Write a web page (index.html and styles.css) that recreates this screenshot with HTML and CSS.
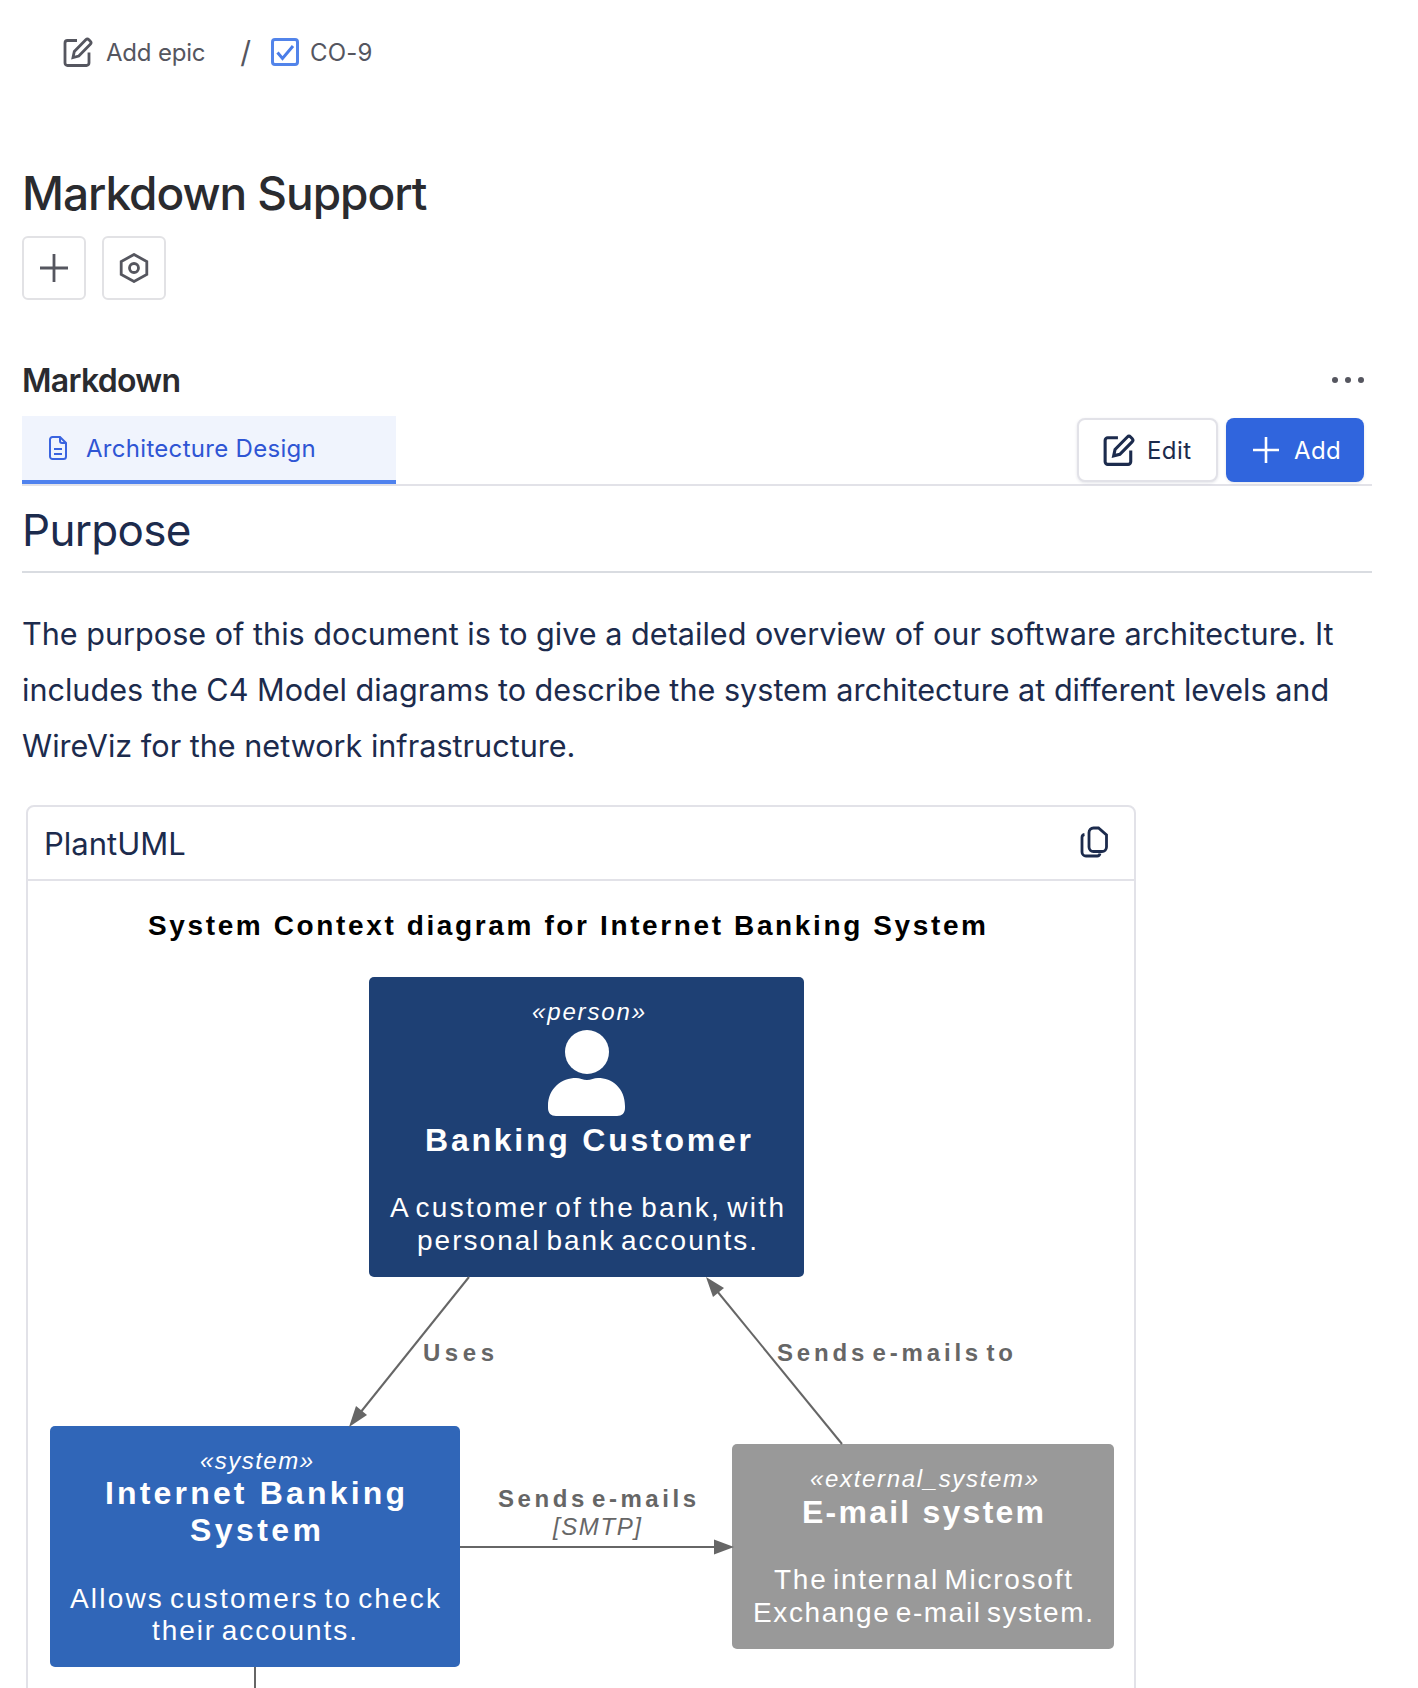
FILE: index.html
```html
<!DOCTYPE html>
<html lang="en">
<head>
    <meta charset="UTF-8">
    <meta name="viewport" content="width=device-width, initial-scale=1.0">
    <title>Markdown Support</title>
    <link rel="stylesheet" href="styles.css">
</head>
<body>

    <div class="page">
        <!-- Breadcrumb -->
        <div class="breadcrumb">
            <svg class="icon-crumb" viewBox="0 0 30 30"><path d="M14 3.500H4.500a2.500 2.500 0 0 0-2.500 2.500V26a2.500 2.500 0 0 0 2.500 2.500h19a2.500 2.500 0 0 0 2.500-2.500V15.500"/><path d="M10 20.500l1.300-6L22.800 2.800a2.200 2.200 0 0 1 3.100 0l1.400 1.400a2.200 2.200 0 0 1 0 3.100L15.800 19z"/></svg>
            <span class="crumb-text">Add epic</span>
            <span class="crumb-slash">/</span>
            <span class="check-box"><svg viewBox="0 0 22 22"><path d="M3.500 11.500l5 6L19 5"/></svg></span>
            <span class="crumb-text crumb-issue">CO-9</span>
        </div>

        <h1 class="title">Markdown Support</h1>

        <div class="title-actions">
            <button class="square-btn"><svg viewBox="0 0 30 30"><path d="M15 1v28M1 15h28"/></svg></button>
            <button class="square-btn"><svg viewBox="0 0 30 30"><path d="M15 1.500l12.800 7v13L15 28.500l-12.800-7v-13z"/><circle cx="15" cy="15" r="4.500"/></svg></button>
        </div>

        <!-- Markdown section -->
        <div class="section-head">
            <h3>Markdown</h3>
            <svg class="dots" viewBox="0 0 32 6"><circle cx="3" cy="3" r="3"/><circle cx="16" cy="3" r="3"/><circle cx="29" cy="3" r="3"/></svg>
        </div>

        <div class="tabs">
            <div class="tab">
                <svg viewBox="0 0 18 24"><path d="M11 1H3.500A2.500 2.500 0 0 0 1 3.500v17A2.500 2.500 0 0 0 3.500 23h11a2.500 2.500 0 0 0 2.500-2.500V7z"/><path d="M11 1v4a2 2 0 0 0 2 2h4M5 13h8M5 18h8"/></svg>
                <span>Architecture Design</span>
            </div>
            <div class="tab-actions">
                <button class="btn btn-edit">
                    <svg viewBox="0 0 30 30"><path d="M14 3.500H4.500a2.500 2.500 0 0 0-2.500 2.500V26a2.500 2.500 0 0 0 2.500 2.500h19a2.500 2.500 0 0 0 2.500-2.500V15.500"/><path d="M10 20.500l1.300-6L22.800 2.800a2.200 2.200 0 0 1 3.100 0l1.400 1.400a2.200 2.200 0 0 1 0 3.100L15.800 19z"/></svg>
                    Edit
                </button>
                <button class="btn btn-add">
                    <svg viewBox="0 0 28 28"><path d="M14 1v26M1 14h26"/></svg>
                    Add
                </button>
            </div>
        </div>

        <!-- Document body -->
        <h2 class="doc-heading">Purpose</h2>
        <p class="doc-text">The purpose of this document is to give a detailed overview of our software architecture. It includes the C4 Model diagrams to describe the system architecture at different levels and WireViz for the network infrastructure.</p>

        <div class="code-card">
            <div class="code-card-head">
                <span>PlantUML</span>
                <svg viewBox="0 0 28 32"><path d="M9 6.500a4.500 4.500 0 0 1 4.500-4.500h5L26.500 9v12a4.500 4.500 0 0 1-4.500 4.500h-8.500A4.500 4.500 0 0 1 9 21z"/><path d="M4.500 8.500A3 3 0 0 0 2 11.500V26a4 4 0 0 0 4 4h11a3 3 0 0 0 3-2.500"/></svg>
            </div>

            <!-- viewBox uses page coordinates so the nodes keep their place on the canvas -->
            <svg class="diagram" viewBox="28 881 1106 900">
                <text class="d-title" x="148" y="935" textLength="838">System Context diagram for Internet Banking System</text>

                <rect class="node-person" x="369" y="977" width="435" height="300" rx="5"/>
                <text class="d-kind" x="532" y="1020" textLength="113">«person»</text>
                <circle class="person-fill" cx="587" cy="1052" r="22"/>
                <path class="person-fill" d="M548 1106c0-18 14-28 28-28 4 0 7 2 11 2s7-2 11-2c14 0 27 10 27 28v2c0 5-3 8-8 8h-61c-5 0-8-3-8-8z"/>
                <text class="d-name" x="425" y="1151" textLength="326">Banking Customer</text>
                <text class="d-desc" x="390" y="1217" textLength="394">A customer of the bank, with</text>
                <text class="d-desc" x="417" y="1250" textLength="340">personal bank accounts.</text>

                <rect class="node-system" x="50" y="1426" width="410" height="241" rx="5"/>
                <text class="d-kind" x="200" y="1469" textLength="113">«system»</text>
                <text class="d-name" x="105" y="1504" textLength="300">Internet Banking</text>
                <text class="d-name" x="190" y="1541" textLength="131">System</text>
                <text class="d-desc" x="70" y="1608" textLength="370">Allows customers to check</text>
                <text class="d-desc" x="152" y="1640" textLength="205">their accounts.</text>

                <rect class="node-external" x="732" y="1444" width="382" height="205" rx="5"/>
                <text class="d-kind" x="810" y="1487" textLength="228">«external_system»</text>
                <text class="d-name" x="802" y="1523" textLength="242">E-mail system</text>
                <text class="d-desc" x="774" y="1589" textLength="298">The internal Microsoft</text>
                <text class="d-desc" x="753" y="1622" textLength="340">Exchange e-mail system.</text>

                <line class="edge" x1="469" y1="1277" x2="360" y2="1413"/>
                <path class="edge-head" d="M349 1427l7-21 11 9z"/>
                <line class="edge" x1="842" y1="1444" x2="717" y2="1291"/>
                <path class="edge-head" d="M706 1277l18 11-11 9z"/>
                <line class="edge" x1="460" y1="1547" x2="716" y2="1547"/>
                <path class="edge-head" d="M734 1547l-20-7.500v15z"/>
                <line class="edge" x1="255" y1="1667" x2="255" y2="1781"/>

                <text class="d-edge" x="423" y="1361" textLength="71">Uses</text>
                <text class="d-edge" x="777" y="1361" textLength="236">Sends e-mails to</text>
                <text class="d-edge" x="498" y="1507" textLength="198">Sends e-mails</text>
                <text class="d-tech" x="553" y="1535" textLength="88">[SMTP]</text>
            </svg>
        </div>
    </div>

</body>
</html>
```

FILE: styles.css
```css
html, body {
    margin: 0;
    padding: 0;
    background-color: #ffffff;
}

body {
    font-family: 'Inter', 'Liberation Sans', sans-serif;
}

.page {
    width: 1350px;
    height: 1688px;
    padding-left: 22px;
    overflow: hidden;
}

svg {
    display: block;
    fill: none;
}

/* Breadcrumb */
.breadcrumb {
    display: flex;
    align-items: center;
    height: 104px;
    padding-left: 41px;
    color: #55565f;
    font-size: 24px;
    letter-spacing: -0.2px;
}

.icon-crumb {
    width: 30px;
    height: 30px;
    margin-right: 13px;
    stroke: #55565f;
    stroke-width: 2.8;
}

.crumb-slash {
    margin: 0 20px 0 35px;
    font-size: 30px;
}

.check-box {
    width: 22px;
    height: 22px;
    margin-right: 11px;
    border: 3px solid #5284ea;
    border-radius: 4px;
}

.check-box svg {
    stroke: #4a7de8;
    stroke-width: 3;
}

.crumb-issue {
    letter-spacing: 0.2px;
}

/* Title */
.title {
    margin: 59px 0 0;
    font-size: 46px;
    line-height: 60px;
    font-weight: 500;
    letter-spacing: -1.05px;
    color: #2a2b2f;
}

.title-actions {
    display: flex;
    gap: 16px;
    margin-top: 13px;
}

.square-btn {
    width: 64px;
    height: 64px;
    padding: 0;
    display: flex;
    align-items: center;
    justify-content: center;
    background-color: #ffffff;
    border: 2px solid #e2e2e5;
    border-radius: 6px;
}

.square-btn svg {
    width: 30px;
    height: 30px;
    stroke: #55565f;
    stroke-width: 2.8;
}

/* Section header and tabs */
.section-head {
    display: flex;
    align-items: center;
    justify-content: space-between;
    height: 60px;
    margin-top: 50px;
    padding-right: 8px;
}

h3 {
    margin: 0;
    font-size: 32px;
    font-weight: 600;
    letter-spacing: -0.7px;
    color: #2a2b2f;
}

.dots {
    width: 32px;
    height: 6px;
    fill: #55565f;
}

.tabs {
    display: flex;
    justify-content: space-between;
    margin-top: 6px;
    padding-right: 8px;
    border-bottom: 2px solid #e2e2e8;
}

.tab {
    display: flex;
    align-items: center;
    width: 347px;
    height: 64px;
    padding-left: 27px;
    background-color: #f0f4fd;
    border-bottom: 4px solid #4f82ee;
    color: #2f55d4;
    font-size: 24px;
    letter-spacing: 0.3px;
}

.tab svg {
    width: 18px;
    height: 24px;
    margin-right: 19px;
    stroke: #3a64e0;
    stroke-width: 2;
}

.tab-actions {
    display: flex;
    gap: 8px;
    padding-top: 2px;
}

.btn {
    display: flex;
    align-items: center;
    height: 64px;
    box-sizing: border-box;
    font-family: inherit;
    font-size: 24px;
    letter-spacing: 0.4px;
    border-radius: 8px;
    box-shadow: 0 1px 3px rgba(30, 40, 80, 0.12);
}

.btn-edit {
    width: 141px;
    padding-left: 24px;
    gap: 12px;
    color: #1c2b4d;
    background-color: #ffffff;
    border: 2px solid #e2e2e8;
}

.btn-edit svg {
    width: 32px;
    height: 32px;
    stroke: #1c2b4d;
    stroke-width: 2.9;
}

.btn-add {
    width: 138px;
    padding-left: 26px;
    gap: 14px;
    color: #ffffff;
    background-color: #3065dd;
    border: none;
}

.btn-add svg {
    width: 28px;
    height: 28px;
    stroke: #ffffff;
    stroke-width: 2.6;
}

/* Document content */
.doc-heading {
    height: 85px;
    margin: 0;
    line-height: 88px;
    font-size: 44px;
    font-weight: 400;
    letter-spacing: -0.7px;
    color: #1c2b4d;
    border-bottom: 2px solid #d9dce1;
}

.doc-text {
    margin: 33px 0 0;
    font-size: 30.6px;
    line-height: 56px;
    color: #1c2b4d;
}

.code-card {
    width: 1106px;
    margin: 31px 0 0 4px;
    border: 2px solid #e2e2e8;
    border-radius: 8px 8px 0 0;
}

.code-card-head {
    display: flex;
    align-items: center;
    justify-content: space-between;
    height: 74px;
    padding: 0 26px 0 16px;
    box-sizing: border-box;
    font-size: 31px;
    color: #1c2b4d;
    border-bottom: 2px solid #e2e2e8;
}

.code-card-head svg {
    width: 28px;
    height: 32px;
    margin-bottom: 2px;
    stroke: #1c2b4d;
    stroke-width: 2.8;
}

/* PlantUML diagram */
.diagram {
    width: 1106px;
    height: 900px;
    font-family: 'Liberation Sans', sans-serif;
}

.d-title {
    fill: #000000;
    font-size: 28px;
    font-weight: 700;
}

.d-kind {
    fill: #ffffff;
    font-size: 24px;
    font-style: italic;
}

.d-name {
    fill: #ffffff;
    font-size: 32px;
    font-weight: 700;
}

.d-desc {
    fill: #ffffff;
    font-size: 28px;
    word-spacing: -4px;
}

.d-edge {
    fill: #666666;
    font-size: 24px;
    font-weight: 700;
    word-spacing: -6px;
}

.d-tech {
    fill: #666666;
    font-size: 24px;
    font-style: italic;
}

.node-person {
    fill: #1e4074;
}

.node-system {
    fill: #3066b8;
}

.node-external {
    fill: #999999;
}

.person-fill {
    fill: #ffffff;
}

.edge {
    stroke: #666666;
    stroke-width: 2;
}

.edge-head {
    fill: #666666;
}
```
